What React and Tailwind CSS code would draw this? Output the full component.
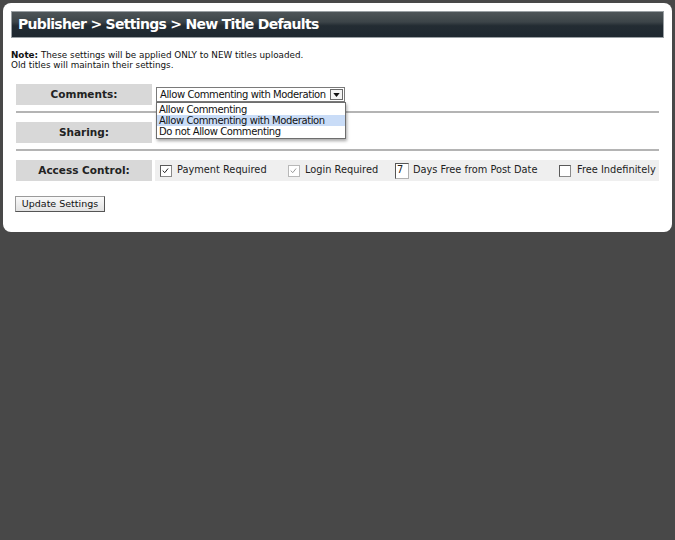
import React from 'react';

const font = { fontFamily: '"DejaVu Sans", Verdana, sans-serif' };

function Check({ checked, disabled }) {
  return (
    <span
      className={`relative inline-block h-[12px] w-[12px] shrink-0 border bg-white ${
        disabled ? 'border-[#b8b8b8]' : 'border-[#8a8a8a] border-t-[#5a5a5a] border-l-[#5a5a5a]'
      }`}
    >
      {checked && (
        <svg viewBox="0 0 12 12" className="absolute left-0 top-0 h-[10px] w-[10px]">
          <path
            d="M2 5.5 L4.5 8 L8.5 3"
            fill="none"
            stroke={disabled ? '#9a9a9a' : '#222'}
            strokeWidth="1.2"
          />
        </svg>
      )}
    </span>
  );
}

function Label({ children }) {
  return (
    <div className="flex h-[21px] w-[136px] shrink-0 items-center justify-center bg-[#d8d8d8] text-[10.5px] font-bold text-[#222]">
      {children}
    </div>
  );
}

export default function App() {
  return (
    <div className="h-[540px] w-[675px] bg-[#484848] p-[3px]" style={font}>
      <div className="h-[229px] w-[669px] rounded-[8px] bg-white p-[8px]">
        <div className="flex h-[27px] items-center border border-[#9aa0a4] bg-[linear-gradient(#4e5558_0%,#3c4448_40%,#232c33_55%,#1f2830_100%)] pl-[6px]">
          <span className="whitespace-nowrap text-[14px] font-bold tracking-[-0.7px] text-white">
            Publisher &gt; Settings &gt; New Title Defaults
          </span>
        </div>

        <div className="mt-[12px] text-[8.8px] leading-[10px] text-[#111]">
          <div>
            <b>Note:</b> These settings will be applied ONLY to NEW titles uploaded.
          </div>
          <div>Old titles will maintain their settings.</div>
        </div>

        <div className="mx-[5px] mt-[14px]">
          {/* Comments */}
          <div className="relative flex items-center">
            <Label>Comments:</Label>
            <div className="ml-[4px] flex h-[15px] w-[189px] items-center border border-[#7a7a7a] bg-white">
              <span className="flex-1 whitespace-nowrap pl-[3px] text-[10px] leading-none tracking-[-0.4px] text-[#111]">
                Allow Commenting with Moderation
              </span>
              <span className="mr-[1px] flex h-[11px] w-[13px] items-center justify-center border border-[#6a6a6a] bg-[#f4f4f4]">
                <svg viewBox="0 0 8 5" className="h-[4px] w-[7px]">
                  <path d="M0 0 H8 L4 5 Z" fill="#111" />
                </svg>
              </span>
            </div>
            <div className="absolute left-[140px] top-[18px] z-10 w-[190px] whitespace-nowrap border border-[#6e6e6e] bg-white py-[1px] text-[10px] leading-[11px] tracking-[-0.4px] text-[#111] shadow-[1px_2px_3px_rgba(0,0,0,0.35)]">
              <div className="px-[2px]">Allow Commenting</div>
              <div className="bg-[#c9dcf7] px-[2px]">Allow Commenting with Moderation</div>
              <div className="px-[2px]">Do not Allow Commenting</div>
            </div>
          </div>

          <div className="mt-[6px] h-[2px] bg-[#b4b4b4]" />

          {/* Sharing */}
          <div className="mt-[9px] flex items-center">
            <Label>Sharing:</Label>
          </div>

          <div className="mt-[6px] h-[2px] bg-[#b4b4b4]" />

          {/* Access Control */}
          <div className="mt-[9px] flex items-center">
            <Label>Access Control:</Label>
            <div className="ml-[3px] flex h-[21px] flex-1 items-center whitespace-nowrap bg-[#efefef] text-[9.8px] text-[#222]">
              <span className="ml-[5px] flex">
                <Check checked />
              </span>
              <span className="ml-[5px] w-[106px] shrink-0">Payment Required</span>
              <span className="ml-[5px] flex">
                <Check checked disabled />
              </span>
              <span className="ml-[5px] w-[85px] shrink-0">Login Required</span>
              <span className="ml-[5px] flex h-[16px] w-[14px] shrink-0 items-center border border-[#b0b0b0] border-l-[#555] border-t-[#555] bg-white pl-[1px]">
                7
              </span>
              <span className="ml-[4px] w-[141px] shrink-0">Days Free from Post Date</span>
              <span className="ml-[5px] flex">
                <Check />
              </span>
              <span className="ml-[6px]">Free Indefinitely</span>
            </div>
          </div>

          <button className="-ml-[1px] mt-[15px] flex h-[16px] w-[90px] items-center justify-center border border-[#9a9a9a] border-b-[#555] border-r-[#555] bg-[linear-gradient(#fafafa,#e2e2e2)] text-[9.5px] text-[#111]">
            Update Settings
          </button>
        </div>
      </div>
    </div>
  );
}
